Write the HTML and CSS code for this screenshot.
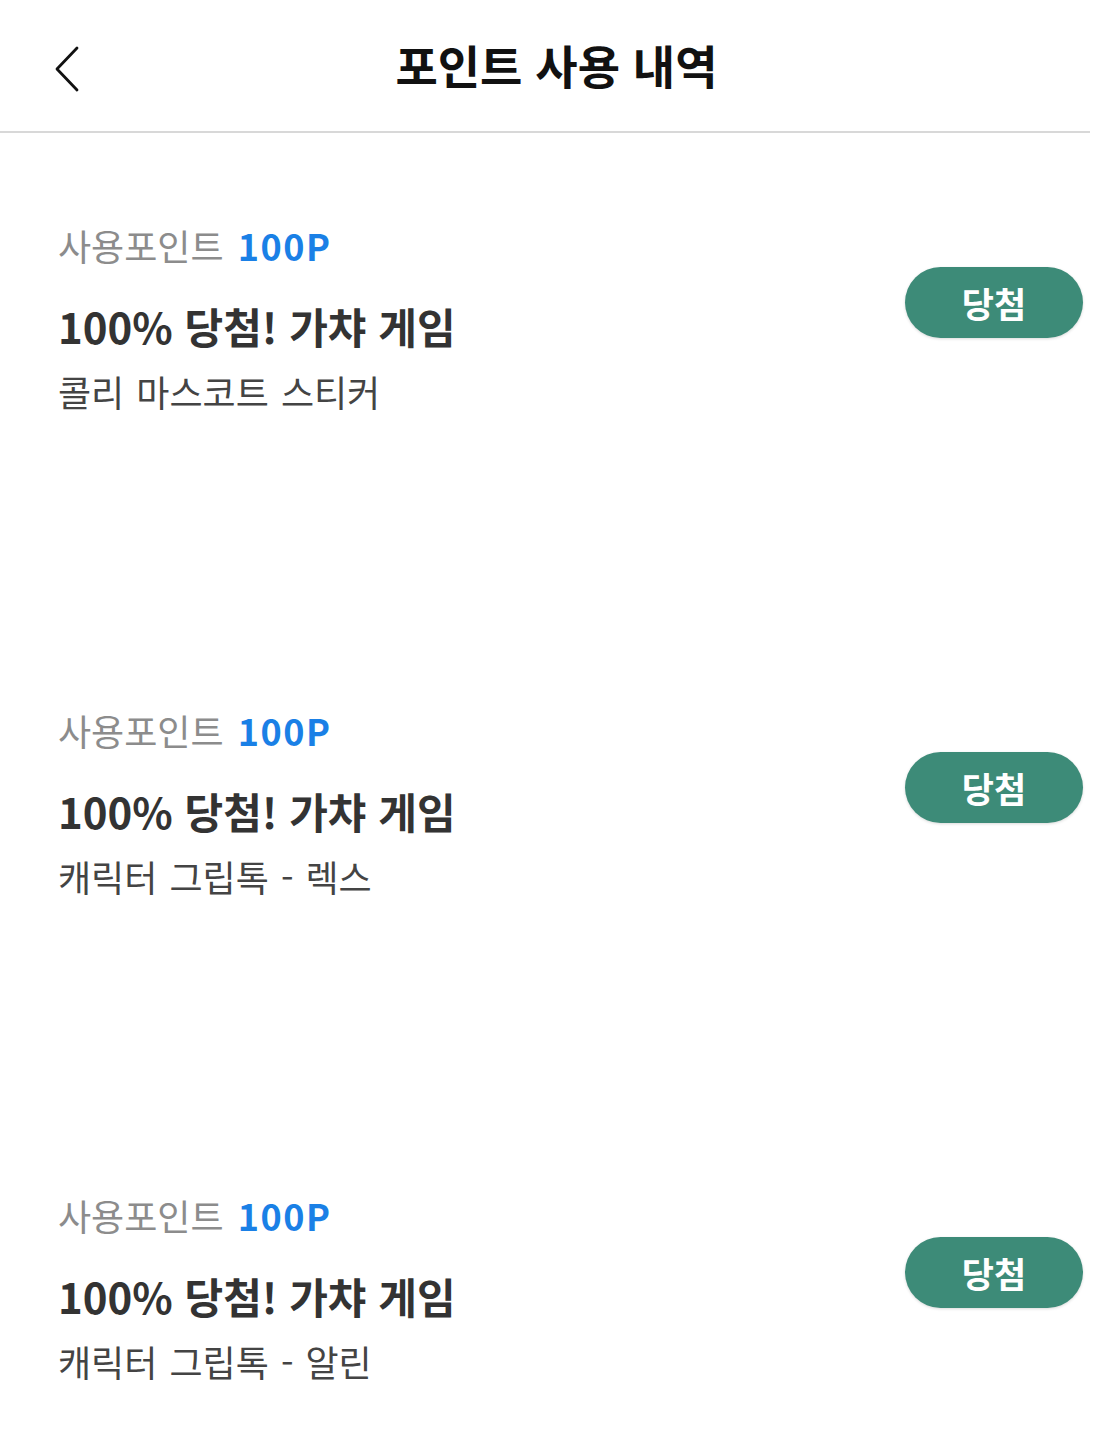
FILE: index.html
```html
<!DOCTYPE html>
<html lang="ko">
<head>
  <meta charset="UTF-8" />
  <meta name="viewport" content="width=device-width, initial-scale=1.0"/>
  <title>포인트 사용 내역</title>
  <link rel="stylesheet" href="styles.css">
</head>
<body>
  <header class="topbar">
    <button class="back" aria-label="뒤로">
      <svg width="30" height="46" viewBox="0 0 30 46">
        <path d="M25 2 L5 23 L25 44" fill="none" stroke="#111" stroke-width="2.8" stroke-linecap="round" stroke-linejoin="round"/>
      </svg>
    </button>
    <h1>포인트 사용 내역</h1>
    <span></span>
  </header>
  <hr class="divider">

  <!-- 사용 내역 목록 -->
  <main class="history">
    <section class="item">
      <div class="info">
        <p class="used">사용포인트 <strong>100P</strong></p>
        <h2>100% 당첨! 가챠 게임</h2>
        <p class="prize">콜리 마스코트 스티커</p>
      </div>
      <span class="badge">당첨</span>
    </section>

    <section class="item">
      <div class="info">
        <p class="used">사용포인트 <strong>100P</strong></p>
        <h2>100% 당첨! 가챠 게임</h2>
        <p class="prize">캐릭터 그립톡 - 렉스</p>
      </div>
      <span class="badge">당첨</span>
    </section>

    <section class="item">
      <div class="info">
        <p class="used">사용포인트 <strong>100P</strong></p>
        <h2>100% 당첨! 가챠 게임</h2>
        <p class="prize">캐릭터 그립톡 - 알린</p>
      </div>
      <span class="badge">당첨</span>
    </section>
  </main>
</body>
</html>
```

FILE: styles.css
```css
* {
  box-sizing: border-box;
  margin: 0;
  padding: 0;
}

body {
  font-family: "Noto Sans CJK KR", "Noto Sans", sans-serif;
  background: #fff;
  color: #333;
}

.topbar {
  display: grid;
  grid-template-columns: 1fr auto 1fr;
  align-items: center;
  height: 131px;
}

.back {
  justify-self: start;
  margin-left: 52px;
  margin-top: 6px;
  background: none;
  border: none;
  cursor: pointer;
  display: flex;
}

.topbar h1 {
  font-size: 46px;
  line-height: 60px;
  font-weight: 700;
  color: #111;
  margin-top: -4px;
}

.divider {
  border: none;
  height: 2px;
  background: #d8d8d8;
  margin-right: 23px;
}

.history {
  display: flex;
  flex-direction: column;
  gap: 291px;
  padding: 89px 30px 40px 58px;
}

.item {
  display: flex;
  justify-content: space-between;
  align-items: flex-start;
}

.used {
  font-size: 36px;
  line-height: 46px;
  color: #8c8c8c;
}

.used strong {
  margin-left: 4px;
  color: #1a80e6;
  font-weight: 700;
  letter-spacing: 1.5px;
}

.info h2 {
  margin-top: 30px;
  font-size: 42px;
  line-height: 56px;
  font-weight: 700;
  color: #333;
}

.prize {
  margin-top: 12px;
  font-size: 36px;
  line-height: 50px;
  color: #444;
  word-spacing: 2px;
}

.badge {
  margin-top: 45px;
  width: 178px;
  height: 71px;
  border-radius: 36px;
  background: #3d8b78;
  color: #fff;
  font-size: 35px;
  font-weight: 700;
  display: flex;
  align-items: center;
  justify-content: center;
  box-shadow: 0 1px 3px rgba(0,0,0,0.15);
}
```
